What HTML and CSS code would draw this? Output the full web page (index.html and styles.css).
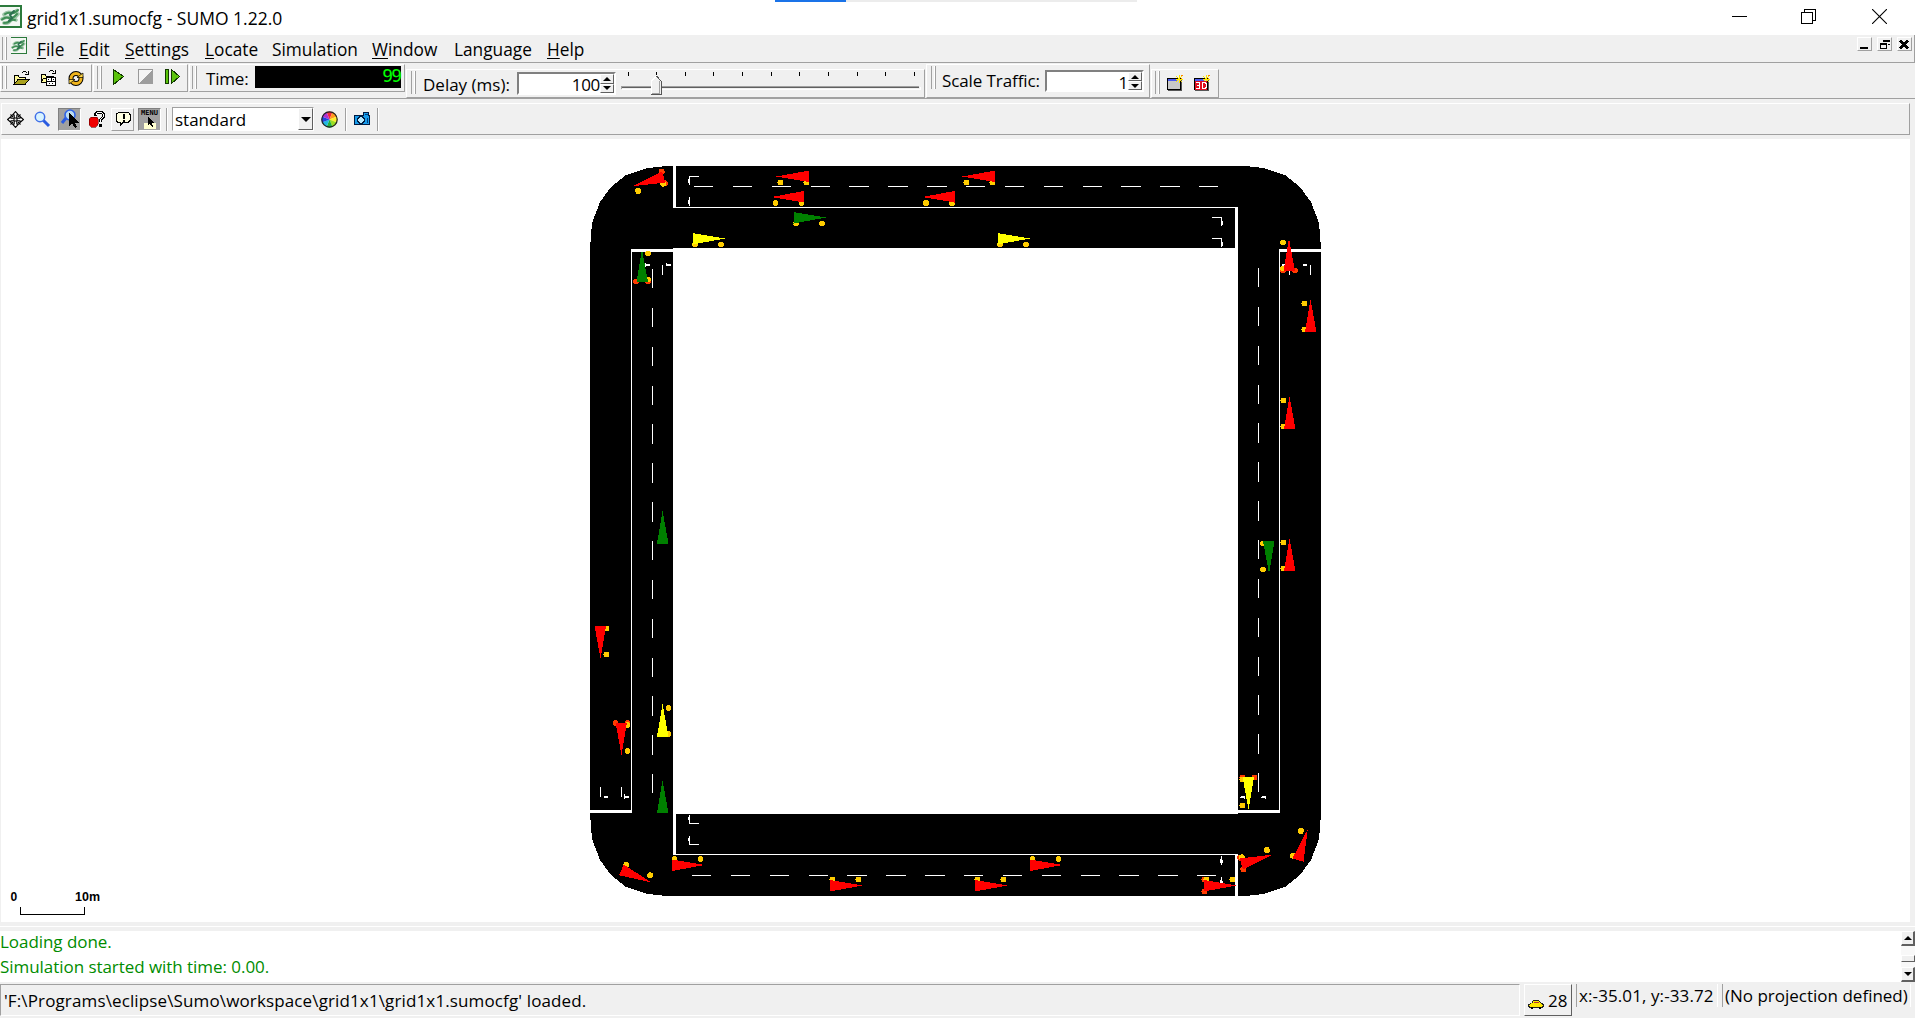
FILE: index.html
```html
<!DOCTYPE html>
<html lang="en">
<head>
<meta charset="utf-8">
<title>grid1x1.sumocfg - SUMO 1.22.0</title>
<link rel="stylesheet" href="styles.css">
</head>
<body>
<svg class="defs" width="0" height="0" aria-hidden="true">
  <defs>
    <symbol id="logo" viewBox="0 0 22 23">
      <rect x="-1" y="1" width="22" height="21" fill="#f4f8f4" stroke="#2c7a3c" stroke-width="1.6"/>
      <g fill="none" shape-rendering="auto" stroke-linecap="round">
        <path d="M4 9.500q3-3 6-2t7-2M2 14q5-3 8-1t8-4M4 18q4 1 6-2t6-1" stroke="#9cc4a6" stroke-width="3.600"/>
        <path d="M5 9q3-2 6-1t7-3M2 14.500q4-3 7-1.500t8-4M4 18q4 0 6-2t5-1" stroke="#3f8f55" stroke-width="2"/>
        <path d="M14 6l-4 4 2 3-3 3" stroke="#2c6f50" stroke-width="2"/>
      </g>
    </symbol>
    <symbol id="window-new" viewBox="0 0 16 16">
      <rect x=".5" y="3.500" width="13" height="11" fill="#c8c8c8" stroke="#000"/>
      <rect x="1" y="4" width="10" height="2" fill="#4a5af0"/>
      <path d="M14.500 4v11.500M1 15.500h14" stroke="#555"/>
      <path d="M9 1l6 6M15 1L9 7M12 0v8M8.500 4h7" stroke="#ffe600"/>
      <path d="M14 1l2-1M14 3h1" stroke="#f80"/>
    </symbol>
    <g id="blink-left" fill="#fc0"><circle cx="-6" cy="3" r="3"/><circle cx="-6" cy="29" r="3"/></g>
    <g id="blink-right" fill="#fc0"><circle cx="6" cy="3" r="3"/><circle cx="6" cy="29" r="3"/></g>
    <g id="brake" fill="#ff3c00"><circle cx="-6" cy="31" r="3"/><circle cx="6" cy="31" r="3"/></g>
    <path id="body" d="M0-1L6 31.500H-5.500z"/>
    <g id="car-l"><use href="#blink-left"/><use href="#body"/></g>
    <g id="car-r"><use href="#blink-right"/><use href="#body"/></g>
    <g id="car-lb"><use href="#brake"/><use href="#blink-left"/><use href="#body"/></g>
    <g id="car-rb"><use href="#brake"/><use href="#blink-right"/><use href="#body"/></g>
  </defs>
</svg>

<header class="titlebar">
  <div class="progress"><i></i></div>
  <svg class="app-logo" width="22" height="23"><use href="#logo"/></svg>
  <span class="t title">grid1x1.sumocfg - SUMO 1.22.0</span>
  <div class="win-buttons">
    <svg width="15" height="15"><path d="M0 7.500h15" stroke="#000"/></svg>
    <svg width="15" height="15"><path d="M.5 3.500h11v11h-11zM3.500 3V.5h11v11H12" fill="none" stroke="#000"/></svg>
    <svg width="15" height="15"><path d="M0 0l15 15M15 0L0 15" stroke="#000" stroke-width="1.100" shape-rendering="auto"/></svg>
  </div>
</header>

<nav class="menubar">
  <i class="grip"></i>
  <svg class="doc-logo" width="16" height="17"><use href="#logo" width="16" height="17"/></svg>
  <span class="t m-file"><u>F</u>ile</span>
  <span class="t m-edit"><u>E</u>dit</span>
  <span class="t m-settings"><u>S</u>ettings</span>
  <span class="t m-locate"><u>L</u>ocate</span>
  <span class="t m-simulation">Simulation</span>
  <span class="t m-window"><u>W</u>indow</span>
  <span class="t m-language">Language</span>
  <span class="t m-help"><u>H</u>elp</span>
  <div class="mdi">
    <b><svg width="11" height="11"><path d="M1 8.500h8" stroke="#000" stroke-width="2"/></svg></b>
    <b><svg width="11" height="11"><path d="M4 1.500h7v4H9M4 1v2M1 5.500h6v4H1.500V5" fill="none" stroke="#000"/><path d="M4 1.500h7M1 5h7" stroke="#000" stroke-width="2"/></svg></b>
    <b><svg width="11" height="11"><path d="M1 1.500l8 8M9 1.500l-8 8" stroke="#000" stroke-width="2.200"/></svg></b>
  </div>
</nav>

<section class="dock">
  <div class="bar bar-file">
    <i class="grip"></i>
    <svg width="17" height="16"><path d="M1 14V5h4l1 2h6v3" fill="#fffa9a" stroke="#000"/><path d="M1 14.500l4-5h11l-4 5z" fill="#a9a11d" stroke="#000"/><path d="M9 3q3-3 5 0M15 1v3h-3" fill="none" stroke="#000"/></svg>
    <svg width="17" height="16"><path d="M1 12V4h4l1 2h7v6z" fill="#fffa9a" stroke="#000"/><path d="M1 12l3-4h5" fill="none" stroke="#000"/><rect x="6.500" y="7.500" width="9" height="8" fill="#fff" stroke="#000"/><path d="M7 11.500h8M11 8v3M9 13.500h1M12 13.500h1M8 9.500h1M13 9.500h1" stroke="#000"/><path d="M9 2q3-3 5 0M15 0v3h-3" fill="none" stroke="#000"/></svg>
    <svg width="17" height="17"><g fill="none" shape-rendering="auto"><circle cx="8" cy="8.500" r="5" stroke="#000" stroke-width="5"/><circle cx="8" cy="8.500" r="5" stroke="#f0b41c" stroke-width="3"/><path d="M9 7.500h6V3zM7 9.500H1V14z" fill="#ffd84a" stroke="#000" stroke-width=".7"/></g></svg>
  </div>
  <div class="bar bar-run">
    <i class="grip"></i>
    <svg width="12" height="16"><path d="M.5.5l10 7-10 8z" fill="#5bc40c" stroke="#123b00"/></svg>
    <svg width="16" height="16"><path d="M.5.500h14v14H.5z" fill="#f4f4f4" stroke="#999"/><path d="M15 0v15H0z" fill="#9d9d9d"/></svg>
    <svg width="16" height="16"><path d="M.5.500h3v14h-3zM6.500.500l8 7-8 7z" fill="#5bc40c" stroke="#123b00"/></svg>
  </div>
  <div class="bar bar-time">
    <i class="grip"></i>
    <span class="t l-time">Time:</span>
    <output class="lcd">99</output>
  </div>
  <div class="bar bar-delay">
    <i class="grip"></i>
    <span class="t l-delay">Delay (ms):</span>
    <div class="field"><span class="t">100</span><span class="spin"><b></b><b class="down"></b></span></div>
    <svg class="slider" width="302" height="27" shape-rendering="crispEdges">
      <path d="M8.500 1v4M36.500 1v4M65.500 1v4M93.500 1v4M122.500 1v4M151.500 1v4M179.500 1v4M208.500 1v4M237.500 1v4M265.500 1v4M294.500 1v4" stroke="#000"/>
      <path d="M1 15.500h298M1.500 15v3" stroke="#a0a0a0"/><path d="M2 16.500h297" stroke="#606060"/><path d="M2 18.500h298v-3" stroke="#fff" fill="none"/>
      <path d="M31.500 23.500V10l5-5 4.500 5v13.500z" fill="#f0f0f0" stroke="#fff"/><path d="M36.500 5l4.500 5v13.500h-10" fill="none" stroke="#555"/><path d="M39.500 10v12.500h-8" fill="none" stroke="#a0a0a0"/>
    </svg>
  </div>
  <div class="bar bar-scale">
    <i class="grip"></i>
    <span class="t l-scale">Scale Traffic:</span>
    <div class="field"><span class="t">1</span><span class="spin"><b></b><b class="down"></b></span></div>
  </div>
  <div class="bar bar-views">
    <i class="grip"></i>
    <svg width="16" height="16"><use href="#window-new"/></svg>
    <svg width="16" height="16"><use href="#window-new"/><path d="M1 6h12v9H1z" fill="#e01020"/><path d="M2 7.500h3v6H2M3 10.500h2M8.500 7v7M8 7.500h3l1 1v4l-1 1H8" fill="none" stroke="#fff"/></svg>
  </div>
</section>

<section class="viewbar">
  <svg class="i-move" width="17" height="17"><g shape-rendering="auto" fill="#fff" stroke="#000" stroke-width="1.100"><path id="arm" d="M8.500.6l3 3.400H9.800v3H7.200V4H5.500z"/><use href="#arm" transform="rotate(90 8.500 8.500)"/><use href="#arm" transform="rotate(180 8.500 8.500)"/><use href="#arm" transform="rotate(270 8.500 8.500)"/><path d="M3.500 3.500l2.500 2.500M13.500 3.500L11 6M3.500 13.500L6 11M13.500 13.500L11 11"/></g></svg>
  <svg class="i-zoom" width="17" height="17"><g shape-rendering="auto"><path d="M9 9l6 6" stroke="#2a5be0" stroke-width="3"/><circle cx="6" cy="6" r="4.700" fill="#d8f3ff" stroke="#3f6fe8" stroke-width="1.500"/></g></svg>
  <span class="tool pressed"><svg width="20" height="20"><g shape-rendering="auto"><path d="M6 9l-4 5" stroke="#2a5be0" stroke-width="3"/><circle cx="10" cy="6" r="5" fill="#bcdcf0" stroke="#2f63e8" stroke-width="1.600"/></g><path d="M9 4v13l3-3 3 5 2-1-2-4h4z" fill="#000"/></svg></span>
  <svg class="i-apple" width="17" height="17"><path d="M7.500 5V3l2-2h4l2 2v3l-3 3v2M12.500 13v3" fill="none" stroke="#000" stroke-width="3"/><path d="M8 4V3l2-2h3l2 2v3l-3 3v2" stroke="#fff" fill="none"/><path d="M1 8l2-2h6l1 2v5l-2 3H3l-2-3z" fill="#f00000" stroke="#600" stroke-width=".6"/></svg>
  <span class="tool raised"><svg width="18" height="18"><path d="M4.500 2.500h10l1.500 2v6l-2 2H9l-3 3v-3H4l-2-2v-6z" fill="#ffffe0" stroke="#000"/><path d="M9.500 4v5M9.500 10v2" stroke="#000" stroke-width="2"/></svg></span>
  <span class="tool pressed menu-tool"><em>MENU</em><svg width="14" height="12"><path d="M1 6h12v6H1z" fill="#ffffd0"/><path d="M5 0v8l2-1 2 3 1-1-1-3h2z" fill="#000"/></svg></span>
  <i class="sep sep-a"></i>
  <div class="combo"><span class="t">standard</span><b></b></div>
  <svg class="i-wheel" width="17" height="17" viewBox="-8.500 -8.500 17 17"><g shape-rendering="auto">
    <path d="M0 0L-3 -7.400A8 8 0 0 1 3-7.400z" fill="#f4283c"/><path d="M0 0L3-7.400A8 8 0 0 1 7.400-3z" fill="#ff9a1c"/><path d="M0 0L7.400-3A8 8 0 0 1 7.400 3z" fill="#fff02a"/><path d="M0 0L7.400 3A8 8 0 0 1 3 7.400z" fill="#9adf20"/><path d="M0 0L3 7.400A8 8 0 0 1-3 7.400z" fill="#20b040"/><path d="M0 0L-3 7.400A8 8 0 0 1-7.400 3z" fill="#20b8e0"/><path d="M0 0L-7.400 3A8 8 0 0 1-7.400-3z" fill="#2048e0"/><path d="M0 0L-7.400-3A8 8 0 0 1-3-7.400z" fill="#b030d0"/><circle r="7.700" fill="none" stroke="#222" stroke-width="1.200"/></g></svg>
  <i class="sep sep-b"></i>
  <svg class="i-camera" width="17" height="14"><path d="M.5 3.500h9v-3h5v3h1v9H.5z" fill="#169bea" stroke="#001a40"/><circle cx="7" cy="8" r="3.300" fill="#b9ecff" stroke="#001a40" stroke-width="1.300"/><path d="M11 2.500h3M13 6v5" stroke="#003f80"/></svg>
  <i class="sep sep-c"></i>
</section>

<main class="canvas">
  <svg width="1909" height="783" viewBox="1 139 1909 783" shape-rendering="crispEdges">
    <path d="M666 166L648 168 626 175 611 187 600 202 592 223 590 248V814L592 839 600 860 611 875 626 887 648 894 666 896H1245L1263 894 1285 887 1300 875 1311 860 1319 839 1321 814V248L1319 223 1311 202 1300 187 1285 175 1263 168 1245 166z"/>
    <g fill="#fff">
      <rect x="673" y="248" width="565" height="566"/>
      <path d="M673 166h3v41h562v41h-3v-40h-562z"/>
      <path d="M673 249h-42v561h-41v3h42v-561h41z"/>
      <path d="M1321 249h-42v561h-41v3h42v-561h41z"/>
      <path d="M673 814h3v40h562v42h-3v-41h-562z"/>
      <!-- turn arrows in front of the junctions -->
      <path d="M689 176h10v1h-9v8h-1v-2h-1v-4h1zM689 197h1v9h-1v-2h-1v-4h1z"/>
      <path d="M1212 217h10v4h1v4h-1v1h-1v-8h-9zM1212 238h10v4h1v4h-1v1h-1v-8h-9z"/>
      <path d="M645 263h1v1h4v2h-4v1h-1zM666 263h1v1h4v2h-5zM662 265h1v10h-1z"/>
      <path d="M1282 264h4v2h-4zM1289 265h1v10h-1zM1303 264h4v2h-4zM1310 265h1v10h-1z"/>
      <path d="M600 787h1v10h-1zM604 796h4v2h-4zM621 787h1v10h-1zM624 794h1v2h4v2h-4v1h-1z"/>
      <path d="M689 815h1v8h9v1h-10v-4h-1v-3h1zM689 836h1v8h9v1h-10v-4h-1v-3h1z"/>
      <path d="M1221 856h1v4h1v3h-1v2h-1v-2h-1v-4h1zM1221 877h1v4h1v3h-1v2h-1v-2h-1v-4h1z"/>
      <path d="M1240 797l2-1h3v3h-1v-1h-4zM1261 797l2-1h3v3h-1v-1h-4z"/>
    </g>
    <g stroke="#fff" stroke-dasharray="19.400 19.450" fill="none">
      <path d="M694 186.500H1219M692 875.500H1217M652.500 269V794M1258.500 268V793"/>
    </g>
    <g fill="red">
      <use href="#car-l" transform="translate(777.500 176.500) rotate(-90)"/>
      <use href="#car-l" transform="translate(772.500 197) rotate(-90)"/>
      <use href="#car-l" transform="translate(963.500 176.500) rotate(-90)"/>
      <use href="#car-l" transform="translate(923 197) rotate(-90)"/>
      <use href="#car-lb" transform="translate(633.500 186) rotate(-106)"/>
      <use href="#car-l" transform="translate(600.500 657.500) rotate(180)"/>
      <use href="#car-lb" transform="translate(621.500 754) rotate(180)"/>
      <use href="#car-l" transform="translate(650.500 882) rotate(113)"/>
      <use href="#car-l" transform="translate(703.500 865) rotate(90)"/>
      <use href="#car-l" transform="translate(861.500 885.500) rotate(90)"/>
      <use href="#car-l" transform="translate(1006.500 885.500) rotate(90)"/>
      <use href="#car-l" transform="translate(1061.500 865) rotate(90)"/>
      <use href="#car-lb" transform="translate(1235.500 885.500) rotate(90)"/>
      <use href="#car-lb" transform="translate(1271.500 855) rotate(74)"/>
      <use href="#car-l" transform="translate(1307.500 830) rotate(18)"/>
      <use href="#car-lb" transform="translate(1289 239.500)"/>
      <use href="#car-l" transform="translate(1310.500 300.500)"/>
      <use href="#car-l" transform="translate(1289.500 397.500)"/>
      <use href="#car-l" transform="translate(1289.500 539.500)"/>
    </g>
    <g fill="green">
      <use href="#car-r" transform="translate(825 217.500) rotate(90)"/>
      <use href="#car-rb" transform="translate(642 250.500)"/>
      <use href="#body" transform="translate(662.500 512)"/>
      <use href="#body" transform="translate(662.500 781.500)"/>
      <use href="#car-r" transform="translate(1269 572.500) rotate(180)"/>
    </g>
    <g fill="#ff0">
      <use href="#car-r" transform="translate(724 238.500) rotate(90)"/>
      <use href="#car-r" transform="translate(1029 238.500) rotate(90)"/>
      <use href="#car-r" transform="translate(662.500 705)"/>
      <use href="#car-rb" transform="translate(1248.500 808.500) rotate(180)"/>
    </g>
    <path d="M20.500 907v7.500h64V907" fill="none" stroke="#000"/>
    <text class="scale" x="10.500" y="901">0</text>
    <text class="scale" x="75" y="901" textLength="25" lengthAdjust="spacingAndGlyphs">10m</text>
  </svg>
</main>

<section class="log">
  <div class="messages">
    <p class="t log-a">Loading done.</p>
    <p class="t log-b">Simulation started with time: 0.00.</p>
  </div>
  <div class="scrollbar"><b></b><i></i><b class="down"></b></div>
</section>

<footer class="status">
  <div class="message"><span class="t">'F:\Programs\eclipse\Sumo\workspace\grid1x1\grid1x1.sumocfg' loaded.</span></div>
  <div class="vehicles">
    <svg width="17" height="9"><path d="M.5 6.500v-2l3-1 2-3h5l3 3 2 1v2l-2 1h-11z" fill="#ffe900" stroke="#222"/><path d="M6 2.500h5" stroke="#b33"/><path d="M3 7.500h2M11 7.500h2" stroke="#000" stroke-width="2"/></svg>
    <span class="t">28</span>
  </div>
  <div class="cell coord"><span class="t">x:-35.01, y:-33.72</span></div>
  <div class="cell geo"><span class="t">(No projection defined)</span></div>
</footer>
</body>
</html>
```
FILE: styles.css
```css
* { box-sizing: border-box; }

body {
  margin: 0;
  width: 1915px;
  height: 1018px;
  overflow: hidden;
  display: flex;
  flex-direction: column;
  background: #f0f0f0;
  color: #000;
  font: 17px/24px "Open Sans", "Noto Sans", sans-serif;
}

svg { display: block; flex: none; shape-rendering: crispEdges; }
.defs { position: absolute; }
.t { flex: none; white-space: pre; line-height: 24px; margin: 0; }
u { text-decoration-thickness: 1px; text-underline-offset: 2px; }

/* title bar */
.titlebar {
  position: relative;
  flex: 0 0 35px;
  display: flex;
  align-items: flex-start;
  background: #fff;
}
.progress {
  position: absolute;
  left: 775px;
  top: 0;
  width: 362px;
  height: 2px;
  background: #ececec;
}
.progress i { display: block; width: 71px; height: 2px; background: #1a73e8; }
.app-logo { margin-top: 5px; }
.title { margin: 6px 0 0 5px; font-size: 17.500px; }
.win-buttons { display: flex; margin: 9px 28px 0 auto; gap: 56px; }
.win-buttons svg:first-child { margin-right: -2px; }

/* menu bar */
.menubar {
  flex: 0 0 28px;
  display: flex;
  align-items: flex-start;
  padding: 2px 2px 0 2px;
  border-bottom: 1px solid #a0a0a0;
  border-right: 1px solid #a0a0a0;
}
.menubar .t { margin-top: 1px; font-size: 17.300px; }
.doc-logo { margin: 0 10px 0 4px; }
.m-file { width: 42px; }
.m-edit { width: 46px; }
.m-settings { width: 80px; }
.m-locate { width: 67px; }
.m-simulation { width: 100px; }
.m-window { width: 82px; }
.m-language { width: 93px; }
.mdi { display: flex; gap: 5px; margin-left: auto; }
.mdi b {
  width: 15px;
  height: 14px;
  padding: 1px;
  border: 1px solid;
  border-color: #fff #a0a0a0 #a0a0a0 #fff;
}

.grip {
  flex: none;
  width: 5px;
  height: 23px;
  border: solid #a0a0a0;
  border-width: 0 1px;
  background: linear-gradient(90deg, transparent 2px, #fff 2px);
}

/* dockable tool bars */
.dock {
  flex: 0 0 36px;
  display: flex;
  align-items: flex-start;
  border-bottom: 1px solid #a0a0a0;
}
.bar {
  flex: none;
  display: flex;
  align-items: flex-start;
  height: 28px;
  margin-top: 1px;
  margin-right: 1px;
  padding-top: 1px;
  border: 1px solid;
  border-color: #fff #a0a0a0 #a0a0a0 #fff;
}
.bar-file { width: 92px; padding-left: 1px; }
.bar-file svg { margin: 4px 0 0 10px; }
.bar-file .grip + svg { margin-left: 6px; }
.bar-file svg:last-child { margin-left: 11px; }
.bar-run { width: 95px; padding-left: 3px; }
.bar-run svg { margin: 3px 13px 0 0; }
.bar-run .grip + svg { margin-left: 11px; }
.bar-run .grip + svg + svg { margin-right: 11px; }
.bar-time { width: 216px; padding-left: 2px; }
.bar-delay { width: 519px; height: 29px; margin-top: 6px; padding-left: 4px; }
.bar-scale { width: 224px; height: 34px; padding-left: 4px; }
.bar-views { width: 68px; height: 29px; margin-top: 6px; padding-left: 3px; }
.bar-views svg { margin: 4px 11px 0 0; }
.bar-views .grip + svg { margin-left: 7px; }
.l-time { width: 49px; margin: 1px 0 0 9px; letter-spacing: -.2px; }
.l-delay { width: 94px; margin: 2px 0 0 7px; }
.l-scale { width: 103px; margin: 3px 0 0 6px; letter-spacing: -.1px; }

.lcd {
  width: 146px;
  height: 22px;
  padding-right: 1px;
  background: #000;
  color: #0f0;
  text-align: right;
  font: 18px/20px "DejaVu Sans Mono", monospace;
  letter-spacing: -2px;
}

.field {
  flex: none;
  display: flex;
  justify-content: flex-end;
  width: 99px;
  height: 22px;
  border: 2px solid;
  border-color: #808080 #fff #fff #808080;
  background: #fff;
}
.bar-delay .field { height: 23px; margin: 1px 4px 0 0; }
.bar-scale .field { margin-top: 4px; }
.field .t { line-height: 22px; letter-spacing: -.3px; }
.spin { width: 14px; display: flex; flex-direction: column; }
.spin b, .scrollbar b {
  flex: 1;
  display: grid;
  place-items: center;
  border: 1px solid;
  border-color: #fff #606060 #606060 #fff;
  background: #f0f0f0;
}
.spin b::before, .scrollbar b::before {
  content: "";
  border: 4px solid transparent;
  border-top-width: 0;
  border-bottom: 4px solid #000;
}
.spin b.down::before, .scrollbar b.down::before { transform: rotate(180deg); }

/* view tool bar */
.viewbar {
  flex: 0 0 32px;
  display: flex;
  align-items: center;
  width: 1909px;
  margin: 4px 0 0 1px;
  padding-left: 5px;
  border: 1px solid;
  border-color: #fff #a0a0a0 #a0a0a0 #fff;
}
.i-zoom { margin-left: 10px; }
.tool {
  flex: none;
  display: flex;
  flex-direction: column;
  align-items: center;
  justify-content: center;
  width: 23px;
  height: 23px;
  border: 1px solid;
}
.pressed { background: #a0a0a0; border-color: #808080 #fff #fff #808080; margin-left: 7px; }
.raised { border-color: #fff #a0a0a0 #a0a0a0 #fff; margin-left: 6px; }
.menu-tool { margin-left: 4px; }
.menu-tool em { font: bold 7px/8px "DejaVu Sans Mono", monospace; }
.i-apple { margin-left: 7px; }
.sep { flex: none; width: 2px; height: 23px; border-left: 1px solid #a0a0a0; background: #fff; }
.sep-a { margin-left: 5px; }
.combo {
  flex: none;
  display: flex;
  justify-content: space-between;
  width: 142px;
  height: 24px;
  margin-left: 4px;
  padding-left: 2px;
  border: 1px solid;
  border-color: #a0a0a0 #fff #fff #a0a0a0;
  background: #fff;
}
.combo .t { line-height: 23px; }
.combo b {
  width: 15px;
  display: grid;
  place-items: center;
  border: 1px solid;
  border-color: #fff #606060 #606060 #fff;
  background: #f0f0f0;
}
.combo b::before { content: ""; border: 5px solid transparent; border-top-color: #000; border-bottom-width: 0; }
.i-wheel { margin-left: 7px; }
.sep-b { margin-left: 7px; }
.i-camera { margin-left: 7px; }
.sep-c { margin-left: 6px; }

/* network view */
.canvas {
  flex: 0 0 788px;
  padding: 4px 0 1px 1px;
}
.canvas svg { background: #fff; }
.scale { font: bold 12px "Liberation Sans", Arial, sans-serif; }

/* message log */
.log {
  flex: 0 0 59px;
  display: flex;
  padding-top: 8px;
  background: linear-gradient(#f0f0f0 3px, #fff 3px, #fff 4px, #f0f0f0 4px);
}
.messages { flex: 1; background: #fff; color: #008c00; }
.messages .t { height: 25px; line-height: 21px; letter-spacing: -.05px; }
.scrollbar {
  width: 14px;
  display: flex;
  flex-direction: column;
  background: #f8f8f8;
}
.scrollbar b { flex: 0 0 15px; border-width: 1px 2px 2px 1px; }
.scrollbar i {
  height: 7px;
  margin: 9px 0 5px;
  border: 1px solid;
  border-color: #fff #606060 #606060 #fff;
  background: #f0f0f0;
}

/* status bar */
.status { flex: 1; display: flex; align-items: flex-start; padding-top: 2px; }
.message {
  width: 1520px;
  height: 32px;
  padding: 4px 0 0 3px;
  border: 1px solid;
  border-color: #a0a0a0 #fff #fff #a0a0a0;
}
.message .t { letter-spacing: .13px; }
.vehicles {
  display: flex;
  align-items: flex-start;
  width: 48px;
  height: 32px;
  margin-left: 4px;
  padding: 4px 0 0 3px;
  border: 1px solid;
  border-color: #fff #606060 #606060 #fff;
}
.vehicles svg { margin: 11px 3px 0 0; }
.cell {
  height: 23px;
  padding-left: 2px;
  border-left: 1px solid #a0a0a0;
  border-right: 1px solid #fff;
}
.cell .t { display: block; }
.coord { width: 142px; margin-left: 4px; }
.coord .t { letter-spacing: .1px; }
.geo { width: 189px; margin-left: 4px; }
```
